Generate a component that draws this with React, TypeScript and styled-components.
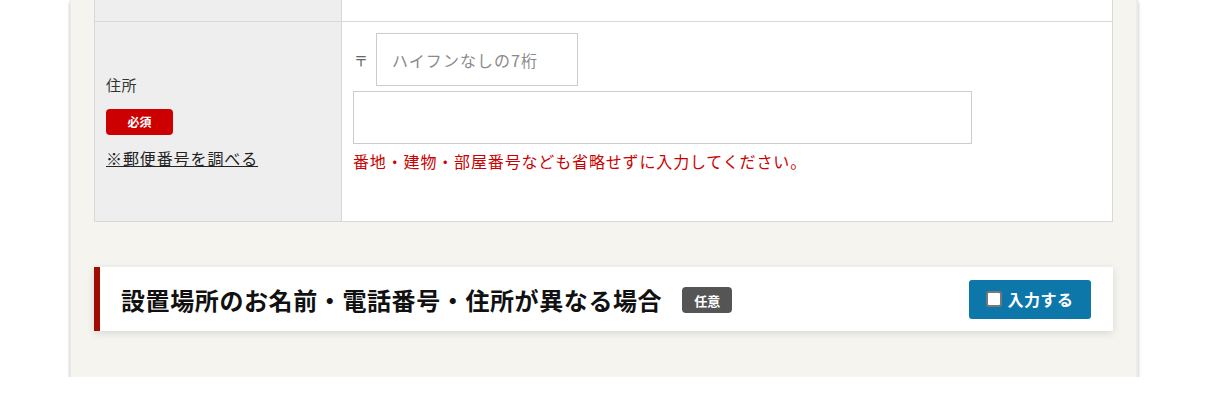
import styled, { createGlobalStyle } from "styled-components";

const GlobalStyle = createGlobalStyle`
  html, body {
    margin: 0;
    padding: 0;
    background: #ffffff;
    font-family: "Noto Sans CJK JP", "Noto Sans", sans-serif;
    color: #333333;
  }
  * { box-sizing: border-box; }
`;

const Panel = styled.div`
  width: 1068px;
  margin: 0 auto;
  background: #f5f4ee;
  border-left: 1px solid #ececea;
  border-right: 2px solid #ececea;
  padding: 0 23px 46px 23px;
  box-shadow: 0 2px 3px rgba(0, 0, 0, 0.3);
`;

const FormTable = styled.div`
  display: grid;
  grid-template-columns: 247px 1fr;
  border-left: 1px solid #d8d8d8;
  border-right: 1px solid #d8d8d8;
  border-bottom: 1px solid #d8d8d8;
`;

const HeadCell = styled.div<{ $short?: boolean }>`
  background: #eeeeee;
  border-right: 1px solid #d8d8d8;
  border-bottom: ${(p) => (p.$short ? "1px solid #d8d8d8" : "none")};
  height: ${(p) => (p.$short ? "22px" : "auto")};
  padding: ${(p) => (p.$short ? "0" : "0 11px")};
  display: flex;
  flex-direction: column;
  justify-content: center;
  align-items: flex-start;
`;

const BodyCell = styled.div<{ $short?: boolean }>`
  background: #ffffff;
  border-bottom: ${(p) => (p.$short ? "1px solid #d8d8d8" : "none")};
  height: ${(p) => (p.$short ? "22px" : "199px")};
  padding: ${(p) => (p.$short ? "0" : "11px 11px 0 11px")};
`;

const Label = styled.div`
  font-size: 15px;
  color: #333333;
  line-height: 22px;
  letter-spacing: 0.5px;
`;

const RequiredBadge = styled.span`
  display: inline-flex;
  align-items: center;
  justify-content: center;
  width: 67px;
  height: 26px;
  margin-top: 13px;
  background: #cc0000;
  color: #ffffff;
  font-size: 12px;
  font-weight: 700;
  border-radius: 4px;
`;

const ZipLink = styled.a`
  margin-top: 11px;
  font-size: 16px;
  line-height: 24px;
  letter-spacing: 0.9px;
  color: #222222;
  text-decoration: underline;
`;

const ZipRow = styled.div`
  display: flex;
  align-items: center;
  gap: 8px;
`;

const ZipMark = styled.span`
  font-size: 14px;
  color: #666666;
  padding-left: 1px;
`;

const TextInput = styled.input<{ $w: number }>`
  width: ${(p) => p.$w}px;
  height: 53px;
  border: 1px solid #cccccc;
  background: #ffffff;
  padding: 0 15px;
  font-family: "Noto Sans CJK JP", sans-serif;
  font-size: 16px;
  letter-spacing: 1px;
  color: #333333;
  outline: none;
  &::placeholder {
    color: #8a8a8a;
  }
`;

const AddressInput = styled(TextInput)`
  display: block;
  margin-top: 5px;
`;

const Note = styled.p`
  margin: 5px 0 0 0;
  font-size: 16px;
  line-height: 24px;
  letter-spacing: 0.85px;
  color: #cc0000;
`;

const SectionCard = styled.div`
  margin-top: 45px;
  height: 64px;
  background: #ffffff;
  border-left: 6px solid #a00c00;
  box-shadow: 0 2px 8px rgba(0, 0, 0, 0.12);
  display: flex;
  align-items: center;
  padding: 0 22px 0 21px;
`;

const SectionTitle = styled.h2`
  margin: 0;
  font-size: 24px;
  font-weight: 700;
  color: #111111;
  letter-spacing: 0.6px;
`;

const OptionalBadge = styled.span`
  display: inline-flex;
  align-items: center;
  justify-content: center;
  width: 50px;
  height: 26px;
  margin-left: 20px;
  margin-top: 2px;
  background: #555555;
  color: #ffffff;
  font-size: 13px;
  font-weight: 700;
  border-radius: 4px;
`;

const ToggleButton = styled.button`
  margin-left: auto;
  width: 122px;
  height: 39px;
  border: none;
  border-radius: 3px;
  background: #0e77aa;
  color: #ffffff;
  font-family: "Noto Sans CJK JP", sans-serif;
  font-size: 16px;
  font-weight: 700;
  letter-spacing: 0.5px;
  display: flex;
  align-items: center;
  justify-content: center;
  gap: 5px;
  cursor: pointer;
`;

const CheckBox = styled.span`
  width: 16px;
  height: 16px;
  background: #ffffff;
  border: 2px solid #777777;
  border-radius: 3px;
`;

export default function App() {
  return (
    <>
      <GlobalStyle />
      <Panel>
        <FormTable>
          <HeadCell $short />
          <BodyCell $short />
          <HeadCell>
            <Label>住所</Label>
            <RequiredBadge>必須</RequiredBadge>
            <ZipLink href="#">※郵便番号を調べる</ZipLink>
          </HeadCell>
          <BodyCell>
            <ZipRow>
              <ZipMark>〒</ZipMark>
              <TextInput $w={202} placeholder="ハイフンなしの7桁" />
            </ZipRow>
            <AddressInput $w={619} />
            <Note>番地・建物・部屋番号なども省略せずに入力してください。</Note>
          </BodyCell>
        </FormTable>
        <SectionCard>
          <SectionTitle>設置場所のお名前・電話番号・住所が異なる場合</SectionTitle>
          <OptionalBadge>任意</OptionalBadge>
          <ToggleButton>
            <CheckBox />
            入力する
          </ToggleButton>
        </SectionCard>
      </Panel>
    </>
  );
}
